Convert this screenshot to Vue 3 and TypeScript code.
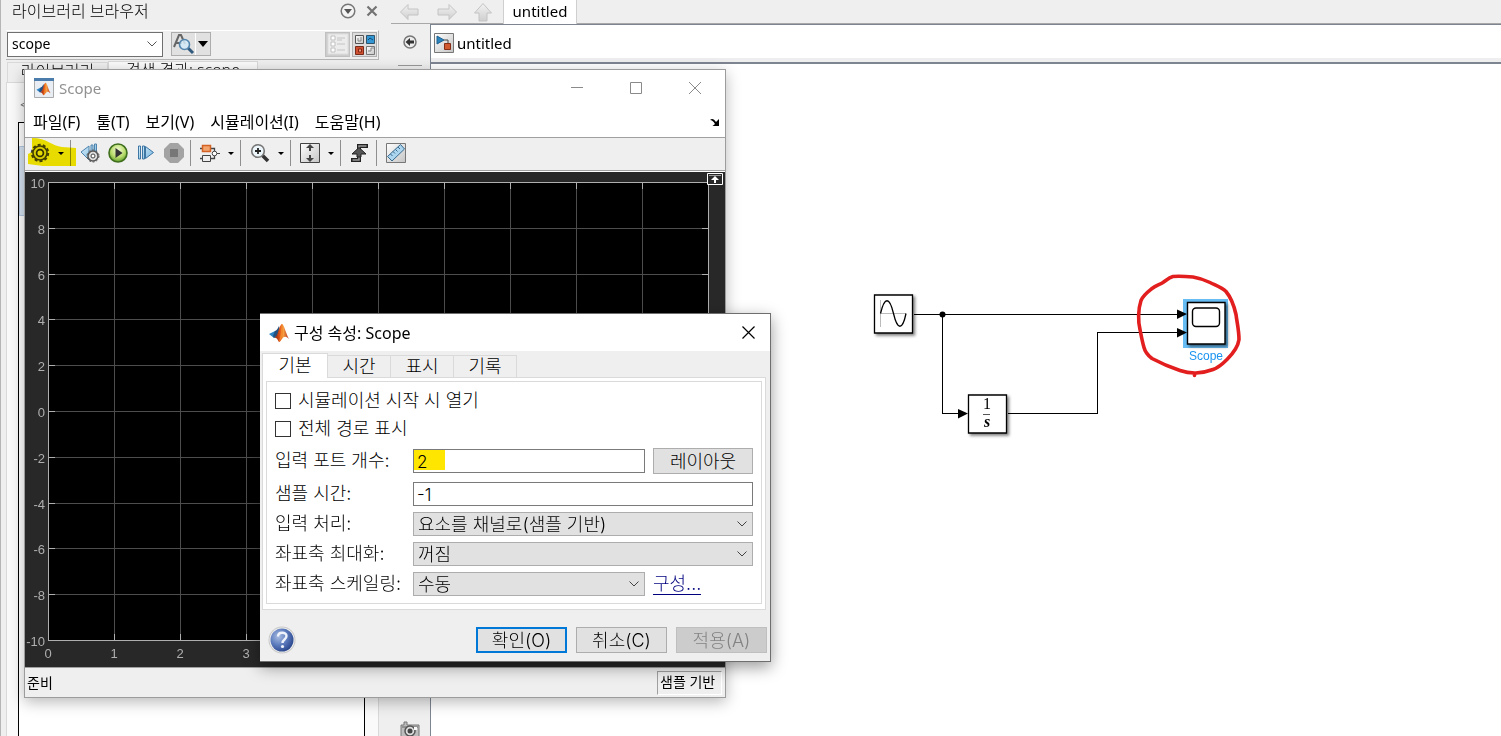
<script setup lang="ts">
import { ref } from 'vue'

const search = ref('scope')
const openAtStart = ref(false)
const fullPath = ref(false)
const ports = ref('2')
const sampleTime = ref('-1')
const menus = ['파일(F)', '툴(T)', '보기(V)', '시뮬레이션(I)', '도움말(H)']
const tabs = ['기본', '시간', '표시', '기록']
const activeTab = ref('기본')

const xTicks = Array.from({ length: 11 }, (_, i) => ({ label: String(i), x: 23 + i * 66 }))
const yTicks = Array.from({ length: 11 }, (_, i) => ({ label: String(10 - i * 2), y: Math.round(10 + i * 45.8) }))
</script>

<template>
  <div class="desktop">
    <svg class="defs" aria-hidden="true">
      <defs>
        <linearGradient id="peak" x1="0" y1="0" x2="1" y2="0">
          <stop offset="0" stop-color="#7a1d12" /><stop offset=".4" stop-color="#e2571b" />
          <stop offset=".62" stop-color="#f7a144" /><stop offset="1" stop-color="#b3261a" />
        </linearGradient>
        <linearGradient id="tile" x1="0" y1="0" x2="1" y2="1">
          <stop offset="0" stop-color="#fff" /><stop offset="1" stop-color="#c4c4c4" />
        </linearGradient>
        <linearGradient id="arrow" x1="0" y1="0" x2="0" y2="1">
          <stop offset="0" stop-color="#f2f2f2" /><stop offset="1" stop-color="#cfcfcf" />
        </linearGradient>
        <radialGradient id="green" cx=".5" cy=".35" r=".65">
          <stop offset="0" stop-color="#f4fbd8" /><stop offset=".6" stop-color="#b9dc6c" /><stop offset="1" stop-color="#5f9f2b" />
        </radialGradient>
        <radialGradient id="help" cx=".35" cy=".35" r=".75">
          <stop offset="0" stop-color="#a9bde2" /><stop offset=".5" stop-color="#5d7cbd" /><stop offset="1" stop-color="#233f86" />
        </radialGradient>
        <linearGradient id="blue" x1="0" y1="0" x2="1" y2="1">
          <stop offset="0" stop-color="#d9effb" /><stop offset="1" stop-color="#74b4de" />
        </linearGradient>
        <symbol id="matlab" viewBox="0 0 20 20">
          <path d="M0 11 6 8l3 3-4 4z" fill="#2b82c4" />
          <path d="M6 8c2-.5 3-3 4-5l1 5-3 5-3 2-1-2z" fill="#24507f" />
          <path d="M5 15c3-1 4-6 5-9 1-3 2-5 3-5 2 0 4 10 7 15-3-3-5-3-7 0-1 1-2 3-3 3-1-1-2-5-5-4z" fill="url(#peak)" />
          <path d="M13 1c1 3 1 8 0 12-1 3-2 5-3 6 2-6 2-12 3-18z" fill="#f58a2b" />
        </symbol>
      </defs>
    </svg>

    <section class="library">
      <header class="dock-title">
        <span class="dock-name">라이브러리 브라우저</span>
        <button class="bare" aria-label="메뉴">
          <svg width="16" height="16"><circle cx="8" cy="8" r="6.8" fill="#f4f4f4" stroke="#777" stroke-width="1.5" /><path d="M4 6h8l-4 5z" fill="#555" /></svg>
        </button>
        <button class="bare" aria-label="닫기">
          <svg width="12" height="12"><path d="M1.5 1.5l9 9M10.500 1.500l-9 9" stroke="#737373" stroke-width="2.200" /></svg>
        </button>
      </header>
      <div class="search-bar">
        <div class="combo">
          <input v-model="search" aria-label="검색어" />
          <svg width="12" height="8"><path d="M1.500 1.500 6 6l4.500-4.500" fill="none" stroke="#555" /></svg>
        </div>
        <div class="find">
          <button aria-label="찾기">
            <svg width="22" height="22">
              <path d="M1 14 6 2h2l4 9M3 10h6" fill="none" stroke="#666" stroke-width="2" />
              <path d="M15 15l5 5" stroke="#315a7e" stroke-width="3" />
              <circle cx="11.500" cy="11.500" r="5" fill="#d3ebf8" fill-opacity=".85" stroke="#5486ad" stroke-width="1.600" />
            </svg>
          </button>
          <button class="drop" aria-label="찾기 옵션"><svg width="10" height="6"><path d="M0 0h10L5 6z" /></svg></button>
        </div>
        <div class="modes">
          <button class="list-mode" aria-label="목록 보기">
            <svg width="22" height="22"><path d="M1 1h20v20H1z" fill="#ececec" stroke="#ddd" /><path d="M4 3h4v4H4zM4 9h4v4H4zM4 15h4v4H4z" fill="#fff" stroke="#c0c0c0" /><path d="M10 5h8M10 11h8M10 17h8M10 7h5" stroke="#c4c4c4" /></svg>
          </button>
          <button class="grid-mode" aria-label="아이콘 보기">
            <svg width="22" height="22">
              <path d="M1.500 2.500h8v8h-8z" fill="url(#tile)" stroke="#555" /><path d="M4 5v3h3V4" fill="none" stroke="#888" />
              <path d="M12.500 2.500h8v8h-8z" fill="#3297d3" stroke="#31536a" /><path d="M14 7l2-2 3 2" fill="none" stroke="#124b78" />
              <path d="M1.500 13.500h8v8h-8z" fill="#cf5030" stroke="#762b1b" /><path d="M4.500 16h3v3h-3z" fill="#f0a080" stroke="#812412" />
              <path d="M12.500 13.500h8v8h-8z" fill="url(#tile)" stroke="#777" /><path d="M14 18h3v-3h3" fill="none" stroke="#888" />
            </svg>
          </button>
        </div>
      </div>
      <div class="lib-tabs"><button>라이브러리</button><button class="on">검색 결과: scope</button></div>
      <div class="lib-pane">
        <div class="lib-nav">&lt;</div>
        <div class="lib-list"><div class="lib-hit"></div></div>
      </div>
    </section>

    <main class="editor">
      <div class="doc-bar">
        <nav class="history">
          <button class="bare" aria-label="뒤로"><svg width="22" height="18"><path d="M1.500 9 9 1.500V6h10v6H9v4.500z" fill="url(#arrow)" stroke="#c4c4c4" /></svg></button>
          <button class="bare" aria-label="앞으로"><svg width="22" height="18"><path d="M20.500 9 13 1.500V6H2v6h11v4.500z" fill="url(#arrow)" stroke="#c4c4c4" /></svg></button>
          <button class="bare" aria-label="위로"><svg width="20" height="20"><path d="M10 1.500 18.500 11H14v8H6v-8H1.500z" fill="url(#arrow)" stroke="#c4c4c4" /></svg></button>
        </nav>
        <button class="doc-tab">untitled</button>
      </div>
      <div class="work">
        <aside class="rail">
          <button class="bare" aria-label="숨기기">
            <svg width="14" height="14"><circle cx="7" cy="7" r="6" fill="#eee" stroke="#777" stroke-width="1.500" /><path d="M2.500 7 7 3v2.500h4v3H7V11z" fill="#333" /></svg>
          </button>
          <i class="rail-line"></i>
          <button class="bare camera" aria-label="스냅샷">
            <svg width="20" height="18"><path d="M1 4h3V1h3v3h12v13H1z" fill="#bdbdbd" stroke="#777" /><path d="M2 6h16" stroke="#666" /><circle cx="10" cy="10" r="5" fill="#ddd" stroke="#555" stroke-width="1.500" /><circle cx="10" cy="10" r="2.500" fill="#444" /><path d="M14 6h3v3h-3z" fill="#f8f8f8" /></svg>
          </button>
        </aside>
        <div class="model">
          <div class="crumb">
            <svg width="20" height="20">
              <path d="M.5.500h19v19H.5z" fill="url(#tile)" stroke="#777" />
              <path d="M3 3v8l7-4z" fill="#2b84bd" stroke="#1e618f" /><path d="M10 7h4v4" fill="none" stroke="#444" /><path d="M10.500 10.500h6v6h-6z" fill="#d25a31" stroke="#872e16" />
            </svg>
            <span>untitled</span>
          </div>
          <svg class="canvas" viewBox="431 64 1070 672" width="1070" height="672">
            <defs><filter id="cast" x="-20%" y="-20%" width="150%" height="150%"><feDropShadow dx="2" dy="2" stdDeviation="1.500" flood-opacity=".5" /></filter></defs>
            <g fill="none" stroke="#000" shape-rendering="crispEdges">
              <path d="M914 314.500h264M942.500 314v99.500H960M1008 413.500h89.500v-81h80" />
            </g>
            <circle cx="942.500" cy="314.500" r="3" />
            <path d="M958 409l10 4.500-10 5z" />
            <g fill="#fff" stroke="#000" stroke-width="1.300" filter="url(#cast)">
              <path d="M874.500 295h38v38h-38zM968.500 395h38v38h-38z" />
            </g>
            <path d="M880.500 300v27M880 313.500h26" stroke="#bbb" />
            <path d="M880.500 313.500c4-17 9-17 13 0s9 17 12.500 0" fill="none" stroke="#000" stroke-width="1.300" />
            <text class="math" x="987" y="409">1</text>
            <path d="M983 414.500h7" stroke="#555" />
            <text class="math s" x="987" y="427">s</text>
            <path d="M1183 299h45v49h-45z" fill="#68bdf5" />
            <path d="M1187.500 302.500h37.500v41.500h-37.500z" fill="#fff" stroke="#000" stroke-width="1.400" filter="url(#cast)" />
            <rect x="1192.500" y="308" width="27" height="18.500" rx="3.500" fill="#fff" stroke="#000" stroke-width="1.400" />
            <path d="M1177 309.500l10 4.500-10 5zM1177 328l10 4.500-10 5z" />
            <text class="block-name" x="1206" y="360">Scope</text>
            <path d="M1194.500 375.500v-2.500c-5 0-10-1-14.500-2.500q-15-5-28-12c-4-3-7-7-8-11-2-7-3-13-4-18-2-8-2-20 1-29 2-5 6-8 11-12 4-3 8-4 11-6s6-5 10-6c7-.5 14 0 20 .5 6 1 12 3 17 5.500 6 3 12 5 16 9 5 6 8 14 10 23 1 8 3 16 3 25-1 8-6 14-12 20-4 4-8 8-14 10q-8 3-17 3.500" fill="none" stroke="#e31e1e" stroke-width="3.600" stroke-linecap="round" stroke-linejoin="round" />
          </svg>
        </div>
      </div>
    </main>

    <section class="win scope">
      <header class="titlebar">
        <svg width="20" height="20"><path d="M.5.500h19v19H.5z" fill="#e8eef3" stroke="#aaa" /><path d="M0 0h20v3H0z" fill="#4c7cac" /><use href="#matlab" x="2" y="4" width="15" height="14" /></svg>
        <h1>Scope</h1>
        <div class="controls">
          <button class="bare" aria-label="최소화"><svg width="12" height="12"><path d="M0 5.500h12" stroke="#8a8a8a" /></svg></button>
          <button class="bare" aria-label="최대화"><svg width="12" height="12"><path d="M.5.500h11v11H.5z" fill="none" stroke="#8a8a8a" /></svg></button>
          <button class="bare" aria-label="닫기"><svg width="12" height="12"><path d="M0 0l12 12M12 0 0 12" stroke="#8a8a8a" /></svg></button>
        </div>
      </header>
      <nav class="menubar">
        <button v-for="m in menus" :key="m" class="bare">{{ m }}</button>
        <svg class="undock" width="10" height="8"><path d="M0 2c2-2 4-1 6 2l3-3v7H2.500L5 6C3 3 2 2 0 2z" /></svg>
      </nav>
      <div class="toolbar">
        <button aria-label="설정"><svg width="20" height="20"><circle cx="10" cy="10" r="7" fill="#ddd" stroke="#444" stroke-width="1.600" /><circle cx="10" cy="10" r="8.200" fill="none" stroke="#444" stroke-width="2" stroke-dasharray="3 2.150" /><circle cx="10" cy="10" r="3.400" fill="#eee" stroke="#333" stroke-width="1.700" /></svg></button>
        <button class="caret" aria-label="설정 옵션"><svg width="6" height="3"><path d="M0 0h6L3 3z" /></svg></button>
        <i></i>
        <button aria-label="스텝 옵션"><svg width="20" height="20"><path d="M9 3v14L1 9zM11 2h2v8h-2zM14.500 1h2v9h-2z" fill="url(#blue)" stroke="#4d83ad" /><circle cx="13" cy="13" r="5" fill="#ddd" stroke="#555" stroke-width="1.500" /><circle cx="13" cy="13" r="6" fill="none" stroke="#555" stroke-dasharray="2 1.800" /><circle cx="13" cy="13" r="2" fill="#fff" stroke="#444" /></svg></button>
        <button aria-label="실행"><svg width="20" height="20"><circle cx="10" cy="10" r="9" fill="url(#green)" stroke="#3f6e1d" stroke-width="1.600" /><path d="M7.500 5v10l7-5z" fill="#333" /></svg></button>
        <button aria-label="스텝"><svg width="18" height="18"><path d="M1.500 2v13h2V2zM5.500 2v13h2V2zM8.500 2.500v12l8-6z" fill="url(#blue)" stroke="#3d75a3" /></svg></button>
        <button aria-label="정지"><svg width="20" height="20"><path d="M6 0h8l6 6v8l-6 6H6l-6-6V6z" fill="#a3a3a3" /><path d="M6 6h8v8H6z" fill="#777" /></svg></button>
        <i></i>
        <button aria-label="신호"><svg width="20" height="20"><path d="M0 5.500h14.500V9M0 15.500h14.500V12" fill="none" stroke="#444" stroke-width="1.300" /><path d="M2.500 2.500h8v6h-8z" fill="#f3a46c" stroke="#d26124" stroke-width="1.500" /><path d="M2.500 12.500h8v6h-8z" fill="#eee" stroke="#444" /><circle cx="14.500" cy="10.500" r="2.300" fill="#fff" stroke="#444" /><path d="M17 10.500h3" stroke="#444" /></svg></button>
        <button class="caret" aria-label="신호 옵션"><svg width="6" height="3"><path d="M0 0h6L3 3z" /></svg></button>
        <i></i>
        <button aria-label="확대"><svg width="20" height="20"><path d="M12 12l6 6" stroke="#333" stroke-width="3.500" /><circle cx="8" cy="8" r="6.300" fill="#edf6fa" stroke="#777" stroke-width="1.600" /><path d="M8 5v6M5 8h6" stroke="#222" stroke-width="1.800" /></svg></button>
        <button class="caret" aria-label="확대 옵션"><svg width="6" height="3"><path d="M0 0h6L3 3z" /></svg></button>
        <i></i>
        <button aria-label="축 맞춤"><svg width="20" height="20"><path d="M.5.500h19v19H.5z" fill="url(#tile)" stroke="#444" /><path d="M10 1l4 4h-3v3H9V5H6zM10 19l4-4h-3v-3H9v3H6z" fill="#444" /></svg></button>
        <button class="caret" aria-label="축 옵션"><svg width="6" height="3"><path d="M0 0h6L3 3z" /></svg></button>
        <i></i>
        <button aria-label="트리거"><svg width="20" height="20"><path d="M1 17h8V3h9" fill="none" stroke="#222" stroke-width="4" /><path d="M2.500 17h6.500V3h7.500" fill="none" stroke="#999" stroke-width="1.500" /><path d="M9 4.500 16 11h-5v3H7v-3H2z" fill="#555" stroke="#222" /></svg></button>
        <i></i>
        <button aria-label="측정"><svg width="20" height="20"><path d="M.5.500h19v19H.5z" fill="url(#tile)" stroke="#777" /><path d="M1.500 13.500 14.500 1.500l4 4.500L6 18z" fill="#acd6ef" stroke="#39698d" /><path d="M4.500 11l2 2M7 8.500l2 2M9.500 6.500l2 2M12 4l2 2" stroke="#39698d" /></svg></button>
        <svg class="marker" width="50" height="32"><path d="M5 2c15 0 20 8 30 9l14 1v18H16L1 28V18l4-2z" fill="#f7ea00" /></svg>
      </div>
      <div class="plot">
        <svg viewBox="0 0 700 495" width="700" height="495">
          <path d="M23 10h661v459H23z" fill="#000" />
          <g shape-rendering="crispEdges">
            <path v-for="t in xTicks.slice(1, 10)" :key="'g' + t.x" :d="`M${t.x + 0.5} 10v459`" stroke="#4d4d4d" />
            <path v-for="t in yTicks.slice(1, 10)" :key="'h' + t.y" :d="`M23 ${t.y + 0.5}h661`" stroke="#4d4d4d" />
            <path v-for="t in xTicks.slice(1, 10)" :key="'t' + t.x" :d="`M${t.x + 0.5} 10v7M${t.x + 0.5} 469v-7`" stroke="#afafaf" />
            <path v-for="t in yTicks.slice(1, 10)" :key="'y' + t.y" :d="`M23 ${t.y + 0.5}h7M684 ${t.y + 0.5}h-7`" stroke="#afafaf" />
            <path d="M23.500 10.500h660v458h-660z" fill="none" stroke="#afafaf" />
          </g>
          <text v-for="t in yTicks" :key="t.label" class="ytick" x="20" :y="t.y + 6">{{ t.label }}</text>
          <text v-for="t in xTicks" :key="t.label" class="xtick" :x="t.x" y="486">{{ t.label }}</text>
          <path d="M682.500 1.500h15v11h-15z" fill="#282828" stroke="#fff" /><path d="M684 3.500h12" stroke="#999" /><path d="M690 4l4 4h-3v3h-2V8h-3z" fill="#fff" />
        </svg>
      </div>
      <footer class="status"><span>준비</span><span class="frame">샘플 기반</span></footer>
    </section>

    <form class="win dialog" @submit.prevent>
      <header class="titlebar">
        <svg width="20" height="20"><use href="#matlab" width="20" height="20" /></svg>
        <h2>구성 속성: Scope</h2>
        <button type="button" class="bare close" aria-label="닫기"><svg width="13" height="13"><path d="M.5.500l12 12M12.500.500l-12 12" stroke="#000" stroke-width="1.200" /></svg></button>
      </header>
      <div class="tabs">
        <button v-for="t in tabs" :key="t" type="button" :class="{ on: t === activeTab }" @click="activeTab = t">{{ t }}</button>
      </div>
      <div class="pane">
        <div class="fields">
          <label class="check"><input v-model="openAtStart" type="checkbox" />시뮬레이션 시작 시 열기</label>
          <label class="check"><input v-model="fullPath" type="checkbox" />전체 경로 표시</label>
          <div class="row first">
            <label for="ports">입력 포트 개수:</label>
            <input id="ports" v-model="ports" class="marked" />
            <button type="button" class="push side">레이아웃</button>
          </div>
          <div class="row">
            <label for="sample">샘플 시간:</label>
            <input id="sample" v-model="sampleTime" />
          </div>
          <div class="row">
            <label for="proc">입력 처리:</label>
            <div class="pick"><select id="proc"><option>요소를 채널로(샘플 기반)</option></select><svg width="12" height="8"><path d="M1.500 1.500 6 6l4.500-4.500" fill="none" stroke="#444" /></svg></div>
          </div>
          <div class="row">
            <label for="maxi">좌표축 최대화:</label>
            <div class="pick"><select id="maxi"><option>꺼짐</option></select><svg width="12" height="8"><path d="M1.500 1.500 6 6l4.500-4.500" fill="none" stroke="#444" /></svg></div>
          </div>
          <div class="row">
            <label for="scaling">좌표축 스케일링:</label>
            <div class="pick"><select id="scaling"><option>수동</option></select><svg width="12" height="8"><path d="M1.500 1.500 6 6l4.500-4.500" fill="none" stroke="#444" /></svg></div>
            <div class="side"><a href="#">구성...</a></div>
          </div>
        </div>
      </div>
      <footer class="actions">
        <button type="button" class="bare help" aria-label="도움말">
          <svg width="28" height="28"><circle cx="14" cy="14" r="13.500" fill="#c9c9c9" /><circle cx="14" cy="14" r="12.500" fill="#eee" /><circle cx="14" cy="14" r="11.500" fill="url(#help)" /><path d="M10 10.500c0-5 8.500-5 8.500-.5 0 3.500-4 3.500-4 7" fill="none" stroke="#eef2fa" stroke-width="2.400" /><circle cx="14.500" cy="20.500" r="1.600" fill="#eef2fa" /></svg>
        </button>
        <button class="push default">확인(O)</button>
        <button type="button" class="push">취소(C)</button>
        <button type="button" class="push" disabled>적용(A)</button>
      </footer>
    </form>
  </div>
</template>

<style>
html, body { margin: 0; background: #fff; }
</style>

<style scoped>
* { box-sizing: border-box; }
.desktop {
  position: relative; display: flex; height: 100vh; min-height: 700px; overflow: hidden;
  background: #efefef; color: #000; font: 16px/20px "Noto Sans", "Noto Sans CJK KR", sans-serif;
}
.defs { position: absolute; width: 0; height: 0; }
svg { display: block; flex: none; }
button, input, select { font: inherit; color: inherit; margin: 0; padding: 0; border-radius: 0; }
.bare { border: 0; background: none; }
h1, h2 { margin: 0; font-weight: 400; }

.library { width: 379px; flex: none; display: flex; flex-direction: column; padding-left: 5px; border-left: 1px solid #b5b5b5; }
.dock-title { height: 30px; flex: none; display: flex; gap: 10px; padding: 1px 1px 0 6px; font-weight: 300; }
.dock-name { flex: 1; }
.dock-title .bare { display: flex; height: 20px; align-items: center; }
.search-bar { height: 30px; flex: none; display: flex; align-items: center; gap: 8px; border: 1px solid #b5b5b5; border-top-color: #fff; border-left: 0; padding: 0 1px 2px 1px; }
.combo { width: 156px; height: 25px; display: flex; align-items: center; background: #fff; border: 1px solid #707070; padding: 0 4px; }
.combo input { flex: 1; min-width: 0; border: 0; outline: 0; background: none; font-size: 14px; }
.find { display: flex; height: 24px; border: 1px solid #adadad; background: #e1e1e1; }
.find button, .modes button { border: 0; background: none; display: flex; align-items: center; justify-content: center; }
.find button { width: 23px; }
.find .drop { width: 15px; border-left: 1px solid #fff; }
.modes { margin-left: auto; display: flex; gap: 2px; }
.modes button { width: 25px; height: 25px; border: 1px solid #b0b0b0; background: #ddd; }
.modes .list-mode { background: #ccc; border-color: #c0c0c0; }
.lib-tabs { height: 22px; flex: none; display: flex; align-items: flex-end; padding: 1px 0 0 1px; font-size: 16px; }
.lib-tabs button { width: 101px; height: 20px; border: 1px solid #d9d9d9; border-bottom: 0; background: #efefef; line-height: 16px; padding-bottom: 3px; white-space: nowrap; font-weight: 300; }
.lib-tabs .on { width: 150px; height: 21px; background: #fafafa; padding-bottom: 5px; }
.lib-pane { flex: 1; display: flex; flex-direction: column; background: #fafafa; border: 1px solid #d9d9d9; border-bottom: 0; padding: 0 13px 0 11px; }
.lib-nav { height: 39px; padding: 12px 2px 0; color: #777; font-size: 14px; line-height: 20px; }
.lib-list { flex: 1; background: #fff; border: 1px solid #000; border-bottom: 0; padding-top: 23px; }
.lib-hit { height: 70px; background: #d6e4f2; border: 1px solid #b4c8e0; }

.editor { flex: 1; min-width: 0; display: flex; flex-direction: column; padding-left: 12px; }
.doc-bar { height: 24px; flex: none; display: flex; border-bottom: 1px solid #a8a8a8; }
.history { width: 112px; display: flex; align-items: center; gap: 15px; padding-left: 8px; }
.doc-tab { width: 74px; height: 24px; border: 1px solid #cfcfcf; border-top: 0; border-bottom: 0; background: #fff; font-size: 15px; line-height: 20px; padding-bottom: 3px; }
.work { flex: 1; min-height: 0; display: flex; }
.rail { width: 39px; flex: none; display: flex; flex-direction: column; align-items: center; padding: 11px 2px 0 0; }
.rail .bare { display: flex; }
.rail-line { width: 24px; height: 1px; margin-top: 16px; background: #999; }
.rail .camera { margin-top: auto; margin-bottom: -3px; }
.model { flex: 1; min-width: 0; display: flex; flex-direction: column; border-left: 1px solid #7d8591; background: #fff; }
.crumb { height: 40px; flex: none; display: flex; align-items: center; gap: 3px; padding-left: 3px; padding-bottom: 1px; border-top: 1px solid #7d8591; border-bottom: 2px solid #7d8591; box-shadow: inset 0 -4px #eee; font-size: 15px; }
.canvas { flex: none; }
.math { font: 16px "Liberation Serif", serif; text-anchor: middle; }
.math.s { font-style: italic; font-weight: 700; }
.block-name { font: 12px "Liberation Sans", sans-serif; fill: #1a94f0; text-anchor: middle; }

.win { position: absolute; display: flex; flex-direction: column; }
.scope { left: 24px; top: 69px; width: 702px; border: 1px solid #9c9c9c; background: #fff; box-shadow: 0 4px 14px rgba(0, 0, 0, .28); }
.titlebar { display: flex; align-items: center; height: 36px; background: #fff; }
.scope .titlebar { padding: 0 24px 0 9px; gap: 5px; color: #919191; }
h1 { font-size: 15px; line-height: 20px; }
.controls { margin-left: auto; display: flex; gap: 47px; }
.menubar { height: 31px; display: flex; gap: 16px; align-items: center; padding: 0 5px 0 8px; }
.undock { margin-left: auto; }
.toolbar { position: relative; height: 34px; display: flex; align-items: center; border: 1px solid #a0a0a0; border-width: 1px 0; background: #efefef; padding: 0 0 2px 1px; }
.toolbar button { width: 28px; height: 26px; display: flex; align-items: center; justify-content: center; border: 0; background: none; }
.toolbar .caret { width: 14px; }
.toolbar i { width: 1px; height: 26px; background: #8f8f8f; margin: 0 5px 0 2px; }
.marker { position: absolute; left: 2px; top: -2px; mix-blend-mode: multiply; pointer-events: none; }
.plot { margin-top: 1px; background: #282828; }
.ytick, .xtick { font: 13px "Liberation Sans", sans-serif; fill: #afafaf; }
.ytick { text-anchor: end; }
.xtick { text-anchor: middle; }
.status { height: 30px; display: flex; justify-content: space-between; align-items: center; background: #efefef; border-top: 1px solid #a0a0a0; padding: 1px 3px 0 2px; font-size: 14px; }
.frame { border: 1px solid #a0a0a0; border-right-color: #fff; border-bottom-color: #fff; width: 65px; height: 24px; padding-left: 2px; line-height: 20px; }

.dialog {
  left: 260px; top: 313px; width: 511px; background: #efefef; border: 1px solid #6e6e6e; border-left: 0;
  box-shadow: 0 5px 15px rgba(0, 0, 0, .4); font: 300 18px/20px Inter, "Noto Sans CJK KR", sans-serif;
}
.dialog .titlebar { height: 37px; padding: 0 15px 0 9px; gap: 5px; }
h2 { font: 16px/20px "Noto Sans", "Noto Sans CJK KR", sans-serif; flex: 1; }
.close { display: flex; }
.tabs { display: flex; align-items: flex-end; height: 26px; padding: 0 0 0 2px; }
.tabs button { width: 63px; height: 22px; border: 1px solid #dadada; border-width: 1px 1px 0 0; background: #efefef; line-height: 20px; font-weight: 300; }
.tabs .on { width: 66px; height: 25px; margin-bottom: -1px; background: #fff; border-left-width: 1px; position: relative; line-height: 22px; }
.pane { margin: 0 4px 0 2px; border: 1px solid #dadada; background: #fff; padding: 3px 3px 5px; }
.fields { border: 1px solid #dadada; padding: 5px 8px 4px; }
.check { display: flex; align-items: center; gap: 7px; height: 28px; }
.check input { appearance: none; width: 16px; height: 16px; border: 1px solid #333; background: #fff; }
.check input:checked { background: #0078d7; }
.row { display: flex; align-items: center; height: 30px; }
.row.first { height: 36px; }
.row label { width: 138px; white-space: nowrap; }
.row > input { flex: 1; min-width: 0; height: 24px; border: 1px solid #7a7a7a; background: #fff; padding: 2px 3px 0; font-size: 17px; outline: 0; }
.row > .marked { background: linear-gradient(#ffe600, #ffe600) 0 0 / 31px 20px no-repeat #fff; }
.side { width: 100px; flex: none; margin-left: 8px; }
.pick { position: relative; flex: 1; min-width: 0; }
.pick select { appearance: none; display: block; width: 100%; height: 24px; border: 1px solid #adadad; background: #e1e1e1; padding: 2px 4px 0; line-height: 20px; font-weight: 300; }
.pick svg { position: absolute; right: 5px; top: 8px; pointer-events: none; }
a { color: #00007f; text-decoration: none; border-bottom: 1px solid #00007f; }
.push { height: 26px; border: 1px solid #adadad; background: #e1e1e1; font-weight: 300; line-height: 20px; padding-top: 2px; }
.actions { display: flex; gap: 9px; align-items: center; padding: 17px 3px 8px 8px; height: 51px; }
.actions .push { width: 91px; }
.actions .default { border: 2px solid #0078d7; }
.actions .push:disabled { background: #ccc; border-color: #bfbfbf; color: #838383; }
.help { margin-right: auto; display: flex; }
</style>
